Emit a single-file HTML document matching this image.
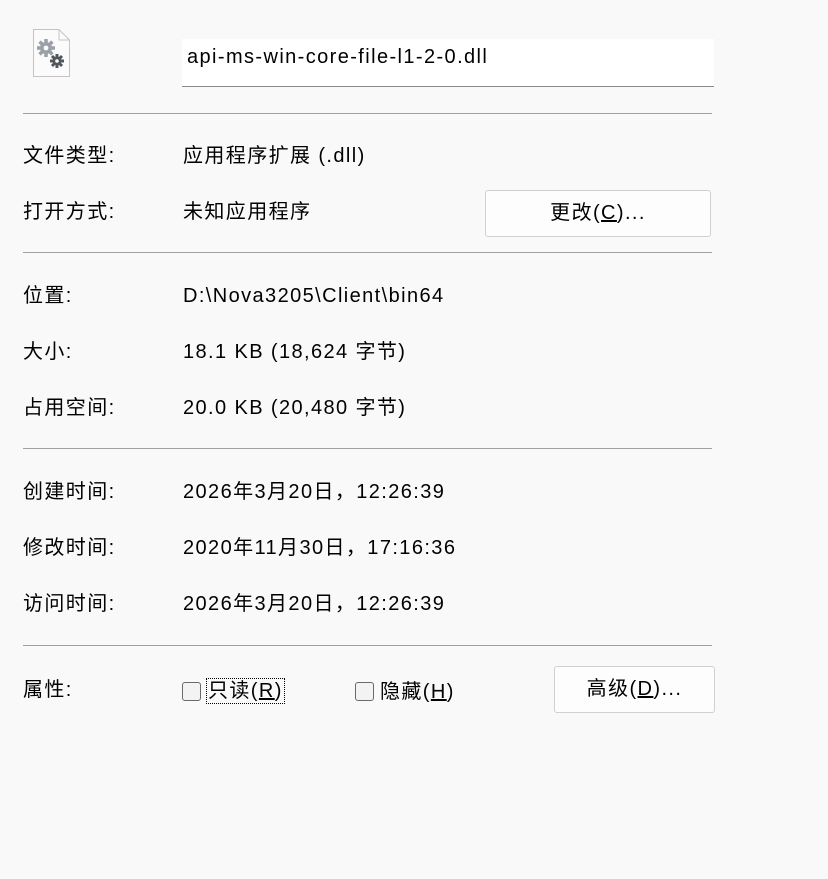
<!DOCTYPE html><html><head><style>
body{margin:0;width:828px;height:879px;background:#f9f9f9;font-family:"Liberation Sans","Noto Sans CJK SC",sans-serif;font-size:20px;letter-spacing:1.4px;color:#000;position:relative;overflow:hidden}
.a{position:absolute;white-space:nowrap;line-height:24px}
.hr{position:absolute;left:23px;width:689px;height:1px;background:#a0a0a0}
.btn{position:absolute;background:#fdfdfd;border:1px solid #d0d0d0;border-radius:3px;text-align:center;box-sizing:border-box}
.cb{position:absolute;width:19px;height:19px;border:1px solid #6a6a6a;border-radius:3px;background:#f3f3f3;box-sizing:border-box}
</style></head><body>
<svg class="a" style="left:32px;top:28px" width="40" height="50" viewBox="0 0 40 50">
<path d="M1.5 1.5H27L37.5 12V48.5H1.5Z" fill="#fbfbfb" stroke="#c4c4c4"/>
<path d="M27 1.5V12H37.5" fill="none" stroke="#c4c4c4"/>
<g fill="#9aa0a6"><circle cx="14" cy="20" r="6"/><g stroke="#9aa0a6" stroke-width="3.5"><path d="M14 11v18M5 20h18M7.6 13.6l12.8 12.8M20.4 13.6L7.6 26.4"/></g></g><circle cx="14" cy="20" r="2.4" fill="#fbfbfb"/>
<g fill="#50565c"><circle cx="25" cy="33" r="4.5"/><g stroke="#50565c" stroke-width="3"><path d="M25 26v14M18 33h14M20 28l10 10M30 28L20 38"/></g></g><circle cx="25" cy="33" r="1.8" fill="#fbfbfb"/>
</svg>
<div class="a" style="left:182px;top:39px;width:532px;height:48px;background:#fff;border-bottom:1px solid #8a8a8a;box-sizing:border-box;padding:6px 0 0 5px">api-ms-win-core-file-l1-2-0.dll</div>
<div class="hr" style="top:113px"></div>
<div class="a" style="left:23px;top:144px">文件类型:</div><div class="a" style="left:183px;top:144px">应用程序扩展 (.dll)</div>
<div class="a" style="left:23px;top:200px">打开方式:</div><div class="a" style="left:183px;top:200px">未知应用程序</div>
<div class="btn" style="left:485px;top:190px;width:226px;height:47px;line-height:45px">更改(<u>C</u>)...</div>
<div class="hr" style="top:252px"></div>
<div class="a" style="left:23px;top:284px">位置:</div><div class="a" style="left:183px;top:284px">D:\Nova3205\Client\bin64</div>
<div class="a" style="left:23px;top:340px">大小:</div><div class="a" style="left:183px;top:340px">18.1 KB (18,624 字节)</div>
<div class="a" style="left:23px;top:396px">占用空间:</div><div class="a" style="left:183px;top:396px">20.0 KB (20,480 字节)</div>
<div class="hr" style="top:448px"></div>
<div class="a" style="left:23px;top:480px">创建时间:</div><div class="a" style="left:183px;top:480px">2026年3月20日，12:26:39</div>
<div class="a" style="left:23px;top:536px">修改时间:</div><div class="a" style="left:183px;top:536px">2020年11月30日，17:16:36</div>
<div class="a" style="left:23px;top:592px">访问时间:</div><div class="a" style="left:183px;top:592px">2026年3月20日，12:26:39</div>
<div class="hr" style="top:645px"></div>
<div class="a" style="left:23px;top:678px">属性:</div>
<div class="cb" style="left:182px;top:682px"></div>
<div class="a" style="left:207px;top:679px;outline:1px dotted #000;padding:0 1px">只读(<u>R</u>)</div>
<div class="cb" style="left:355px;top:682px"></div>
<div class="a" style="left:380px;top:680px">隐藏(<u>H</u>)</div>
<div class="btn" style="left:554px;top:666px;width:161px;height:47px;line-height:45px">高级(<u>D</u>)...</div>
</body></html>
